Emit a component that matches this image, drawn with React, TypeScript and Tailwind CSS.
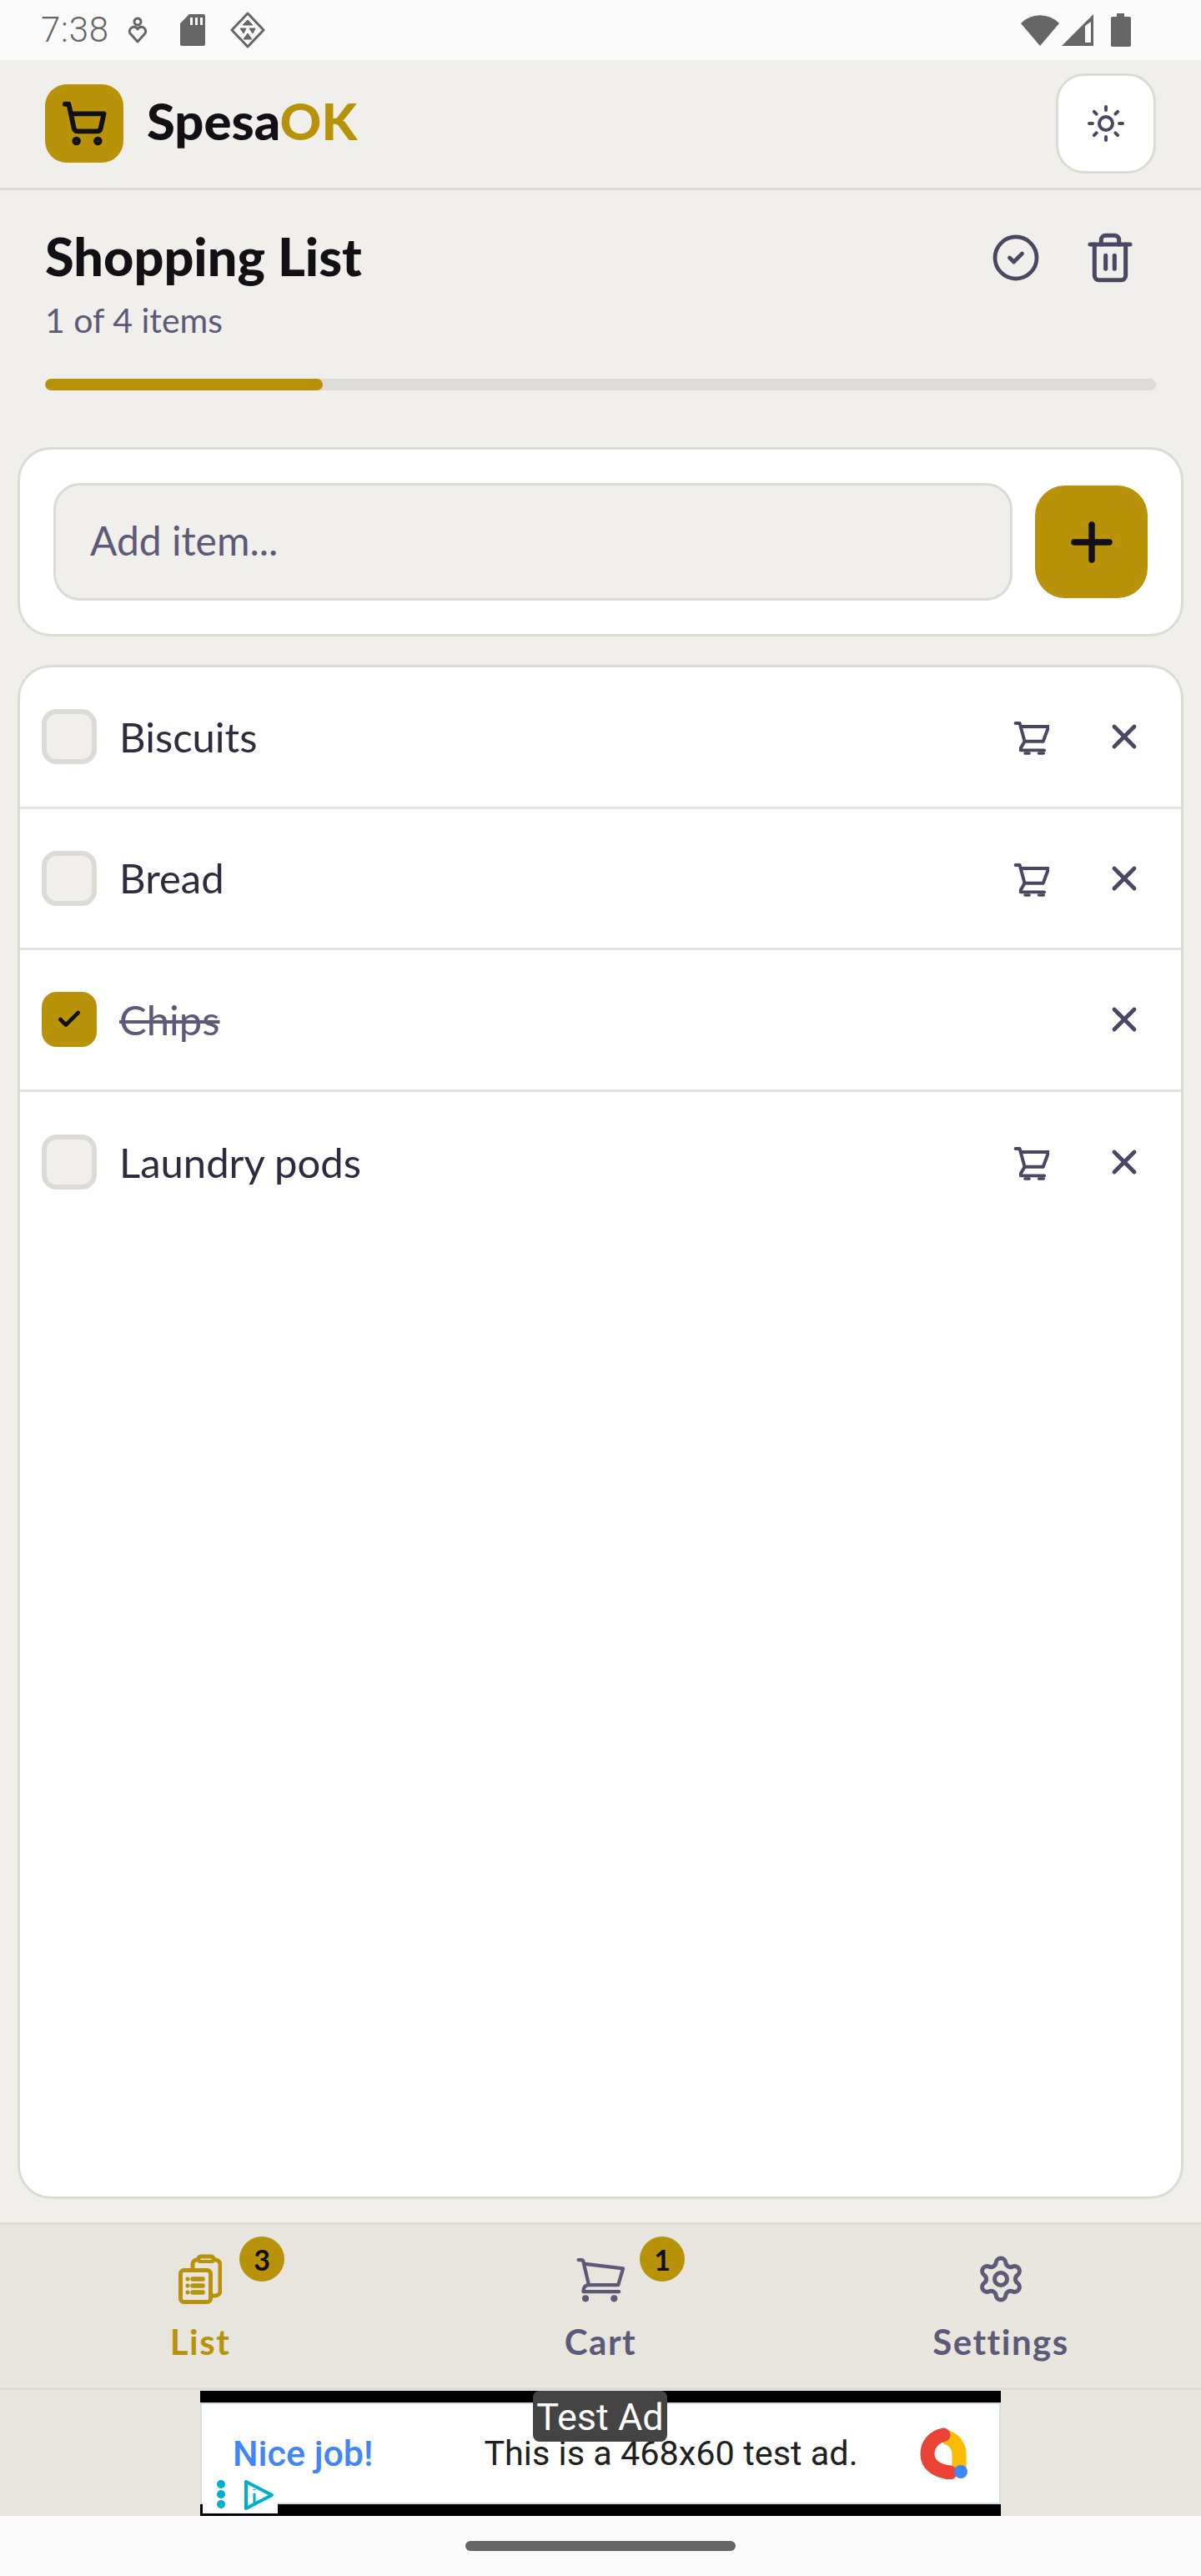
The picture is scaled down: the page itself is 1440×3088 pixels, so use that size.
import React from 'react';
import { Check, CircleCheck, Plus, Settings, ShoppingCart, Sun, Trash2, X } from 'lucide-react';

const items = [
  { name: 'Biscuits', done: false },
  { name: 'Bread', done: false },
  { name: 'Chips', done: true },
  { name: 'Laundry pods', done: false },
];

function RowCart() {
  return (
    <svg className="mt-[4px]" width="43" height="42" viewBox="30 30 130 125" fill="none" stroke="#4a4763" strokeWidth="12" strokeLinecap="round" strokeLinejoin="round">
      <path d="M38 38h15l18 66-14 24v8h85" />
      <path d="M60 50h98l-20 54H71" />
      <path d="M72 147h16M122 147h18" strokeWidth="10" />
    </svg>
  );
}

function ListIcon() {
  return (
    <svg width="52" height="60" viewBox="0 0 52 60" fill="none" stroke="#b8930a" strokeWidth="5" strokeLinecap="round" strokeLinejoin="round">
      <path d="M17 16v-4a5 5 0 0 1 5-5h2a3 3 0 0 1 3-4h12a3 3 0 0 1 3 4h2a6 6 0 0 1 6 6v31a6 6 0 0 1-6 6h-3" />
      <path d="M25 9h16" strokeWidth="4" />
      <rect x="2.5" y="19.5" width="36" height="38" rx="4" />
      <path d="M11 30v0M11 38v0M11 46v0" />
      <path d="M17 30h12M17 38h12M17 46h12" strokeWidth="5.5" />
    </svg>
  );
}

function NavCart() {
  return (
    <svg width="63" height="57" viewBox="25 80 190 170" fill="none" stroke="#5c5a78" strokeWidth="13" strokeLinecap="round" strokeLinejoin="round">
      <path d="M39 93h10a8 8 0 0 1 8 7l20 85" />
      <path d="M63 108l140 17-18 60H77c-14 0-20 10-20 25h131" />
      <circle cx="65" cy="235" r="6" fill="#5c5a78" />
      <circle cx="170" cy="235" r="6" fill="#5c5a78" />
    </svg>
  );
}

function Badge({ count }: { count: number }) {
  return (
    <span className="absolute top-[-20px] left-[calc(50%+47px)] flex h-[54px] w-[54px] items-center justify-center rounded-full bg-[#b8930a] text-[34px] font-bold text-[#111014]">
      {count}
    </span>
  );
}

function AdChoices() {
  return (
    <svg width="90" height="52" viewBox="0 0 90 52" fill="none">
      <circle cx="22" cy="17" r="5" fill="#00aecd" />
      <circle cx="22" cy="29" r="5" fill="#00aecd" />
      <circle cx="22" cy="41" r="5" fill="#00aecd" />
      <path d="M52 14v32l31-16z" stroke="#00aecd" strokeWidth="4" strokeLinejoin="round" />
      <path d="M62 28v12M62 23v1" stroke="#00aecd" strokeWidth="3" />
    </svg>
  );
}

function AdLogo() {
  return (
    <svg width="64" height="62" viewBox="0 0 64 62" fill="none">
      <path d="M34 11A21 21 0 0 1 52 30v24" stroke="#fbbc04" strokeWidth="17" />
      <path d="M33 9A23 23 0 0 0 14 32c0 12 10 20 27 22" stroke="#ea4335" strokeWidth="17" strokeLinecap="round" />
      <circle cx="54" cy="53" r="8" fill="#4285f4" />
    </svg>
  );
}

export default function App() {
  return (
    <div className="flex h-[3088px] w-[1440px] flex-col bg-[#f0efeb] font-['Lato',sans-serif] text-[#111014]">
      {/* Status bar */}
      <div className="flex h-[72px] items-center justify-between bg-[#fafafa] pl-[49px] pr-[84px] font-['Roboto',sans-serif] text-[#666666]">
        <div className="flex items-center">
          <span className="text-[42px] font-light leading-none tracking-[0.8px]">7:38</span>
          <svg className="ml-[22px]" width="24" height="32" viewBox="0 0 24 32" fill="none" stroke="#666666" strokeWidth="3">
            <circle cx="12" cy="6" r="4" />
            <path d="M12 30 3 20a5 5 0 0 1 9-5 5 5 0 0 1 9 5z" strokeLinejoin="round" />
          </svg>
          <svg className="ml-[39px]" width="30" height="38" viewBox="0 0 30 38">
            <path d="M11 0h17a2 2 0 0 1 2 2v34a2 2 0 0 1-2 2H2a2 2 0 0 1-2-2V11z" fill="#666666" />
            <path d="M12 4h3v9h-3zM18 4h3v9h-3zM24 4h3v9h-3z" fill="#fafafa" />
          </svg>
          <svg className="ml-[30px]" width="42" height="44" viewBox="0 0 42 44" fill="none" stroke="#666666">
            <path d="M21 2 40 22 21 42 2 22z" strokeWidth="3" strokeLinejoin="round" />
            <path d="M21 10l6 6H15zM12 20h7l-3 6zM23 20h7l-3 6zM21 26l5 7H16z" fill="#666666" strokeWidth="1" />
          </svg>
        </div>
        <div className="flex items-center">
          <svg width="46" height="38" viewBox="0 0 46 38">
            <path d="M0 11a32 32 0 0 1 46 0L23 38z" fill="#666666" />
          </svg>
          <svg className="ml-[3px]" width="38" height="38" viewBox="0 0 38 38">
            <path d="M38 0v38H0z" fill="#666666" />
            <path d="M28 14l7-5v25h-7z" fill="#fafafa" />
          </svg>
          <svg className="ml-[21px]" width="24" height="40" viewBox="0 0 24 40">
            <path d="M7 0h9v4h6a2 2 0 0 1 2 2v32a2 2 0 0 1-2 2H2a2 2 0 0 1-2-2V6a2 2 0 0 1 2-2h5z" fill="#666666" />
          </svg>
        </div>
      </div>

      {/* Header */}
      <header className="flex h-[156px] items-center justify-between border-b-[3px] border-[#dddbd5] px-[54px] pb-[1px]">
        <div className="flex items-center gap-[28px]">
          <div className="flex h-[94px] w-[94px] items-center justify-center rounded-[26px] bg-[#b8930a]">
            <ShoppingCart size={56} strokeWidth={2.5} color="#111014" />
          </div>
          <div className="mb-[6px] text-[61.5px] font-black leading-none">
            Spesa<span className="text-[#b8930a]">OK</span>
          </div>
        </div>
        <button className="flex h-[120px] w-[120px] items-center justify-center rounded-[34px] border-[3px] border-[#dddbd5] bg-white">
          <Sun size={48} strokeWidth={2} color="#4a4763" />
        </button>
      </header>

      {/* Title and progress */}
      <section className="px-[54px] pt-[45px]">
        <div className="flex items-start justify-between">
          <div>
            <h1 className="text-[63px] font-black leading-[68px]">Shopping List</h1>
            <p className="mt-[20px] text-[41px] leading-[46px] text-[#5c5a78]">1 of 4 items</p>
          </div>
          <div className="mt-[4px] flex items-center gap-[51px] pr-[23px]">
            <CircleCheck size={60} strokeWidth={1.9} color="#4a4763" />
            <Trash2 size={64} strokeWidth={1.9} color="#4a4763" />
          </div>
        </div>
        <div className="mt-[47px] h-[14px] overflow-hidden rounded-full bg-[#dddbd5]">
          <div className="h-full rounded-full bg-[#b8930a]" style={{ width: '25%' }} />
        </div>
      </section>

      {/* Add item */}
      <div className="mx-[21px] mt-[68px] flex items-center rounded-[40px] border-[3px] border-[#dddbd5] bg-white px-[40px] py-[40px]">
        <div className="flex h-[141px] flex-1 items-center rounded-[32px] border-[3px] border-[#dddbd5] bg-[#f0efeb] pb-[3px] pl-[41px] text-[48px] text-[#5c5a78]">
          Add item...
        </div>
        <button className="ml-[27px] flex h-[135px] w-[135px] items-center justify-center rounded-[36px] bg-[#b8930a]">
          <Plus size={72} strokeWidth={2.5} color="#111014" />
        </button>
      </div>

      {/* Items */}
      <div className="mx-[21px] mb-[28px] mt-[34px] flex-1 overflow-hidden rounded-[40px] border-[3px] border-[#dddbd5] bg-white">
        {items.map(item => (
          <div key={item.name} className="flex h-[169.5px] items-center border-b-[3px] border-[#e4e3dd] pl-[26px] pr-[44px] last:border-b-0">
            {item.done ? (
              <span className="flex h-[66px] w-[66px] items-center justify-center rounded-[18px] bg-[#b8930a]">
                <Check size={32} strokeWidth={3.5} color="#111014" />
              </span>
            ) : (
              <span className="h-[66px] w-[66px] rounded-[18px] border-[6px] border-[#dddbd5] bg-[#f0efeb]" />
            )}
            <span className={item.done ? 'ml-[27px] flex-1 text-[49px] text-[#5c5a78] line-through' : 'ml-[27px] flex-1 text-[49px] text-[#2d2b3d]'}>
              {item.name}
            </span>
            {!item.done && <RowCart />}
            <X className="ml-[66px]" size={48} strokeWidth={2.4} color="#4a4763" />
          </div>
        ))}
      </div>

      {/* Bottom nav */}
      <nav className="grid h-[201px] grid-cols-3 border-y-[3px] border-[#dddbd5] bg-[#e8e5df] pt-[34px]">
        <div className="flex flex-col items-center">
          <div className="relative flex h-[62px] w-[62px] items-center justify-center">
            <ListIcon />
            <Badge count={3} />
          </div>
          <span className="mt-[20px] text-[42px] font-bold leading-[48px] tracking-[1.5px] text-[#b8930a]">List</span>
        </div>
        <div className="flex flex-col items-center">
          <div className="relative flex h-[62px] w-[62px] items-center justify-center">
            <NavCart />
            <Badge count={1} />
          </div>
          <span className="mt-[20px] text-[42px] font-bold leading-[48px] tracking-[1.5px] text-[#5c5a78]">Cart</span>
        </div>
        <div className="flex flex-col items-center">
          <div className="flex h-[62px] w-[62px] items-center justify-center">
            <Settings size={60} strokeWidth={2} color="#5c5a78" />
          </div>
          <span className="mt-[20px] text-[42px] font-bold leading-[48px] tracking-[1.5px] text-[#5c5a78]">Settings</span>
        </div>
      </nav>

      {/* Ad banner */}
      <div className="flex h-[151px] items-end justify-center bg-[#e8e5df] font-['Roboto',sans-serif]">
        <div className="relative flex h-[150px] w-[960px] flex-col bg-black py-[14px]">
          <div className="flex flex-1 items-center border-2 border-[#d4dde3] bg-white pl-[37px] pr-[36px]">
            <span className="text-[43px] font-medium leading-[30px] text-[#4285f4]">Nice job!</span>
            <span className="ml-[133px] flex-1 text-[41.4px] leading-[30px] text-[#202020]">This is a 468x60 test ad.</span>
            <AdLogo />
          </div>
          <div className="absolute left-[399px] top-0 h-[61px] w-[161px] rounded-[8px] bg-[#444444] pt-[5px] text-center text-[45px] leading-[54px] text-white">
            Test Ad
          </div>
          <div className="absolute bottom-[3px] left-[3px] bg-white">
            <AdChoices />
          </div>
        </div>
      </div>

      {/* Gesture bar */}
      <div className="flex h-[72px] justify-center bg-[#fafafa] pt-[30px]">
        <div className="h-[12px] w-[324px] rounded-full bg-[#666666]" />
      </div>
    </div>
  );
}
